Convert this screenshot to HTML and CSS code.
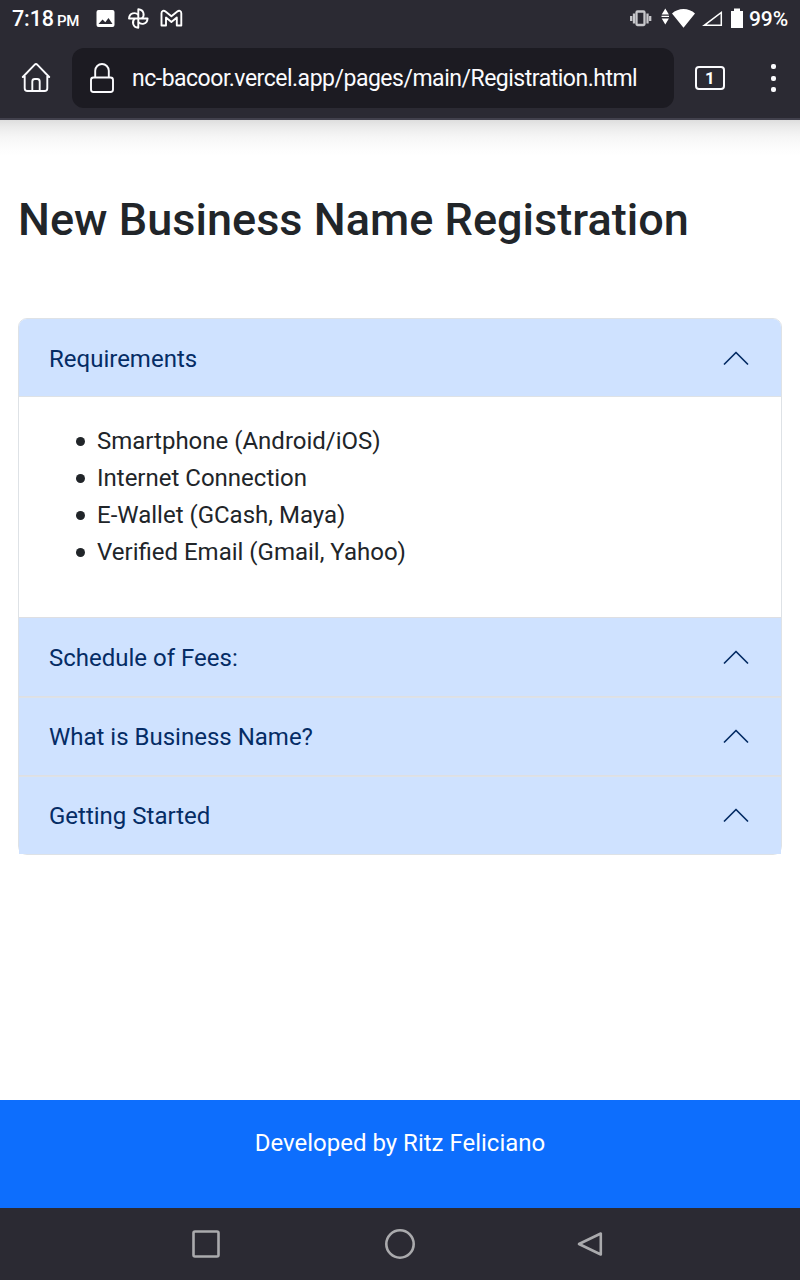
FILE: index.html
```html
<!DOCTYPE html>
<html lang="en">
<head>
<meta charset="utf-8">
<title>New Business Name Registration</title>
<link rel="stylesheet" href="styles.css">
</head>
<body>
<div class="screen">
  <header class="chrome">
    <div class="status">
      <span class="clock">7:18</span><span class="meridiem">PM</span>
      <svg class="status-left" width="90" height="24" viewBox="95 6 90 24">
        <path fill="#fff" fill-rule="evenodd" d="M98.500 10h14a2 2 0 0 1 2 2v13a2 2 0 0 1-2 2h-14a2 2 0 0 1-2-2V12a2 2 0 0 1 2-2zM98.500 24h14l-4-6-3.200 4.200-2.800-2.800z"/>
        <g fill="none" stroke="#fff" stroke-width="1.900" stroke-linejoin="round">
          <path d="M138.300 18.500V9.200c5.800.4 6.600 6.400 3.600 9.300"/>
          <path d="M138.300 18.500V9.200c5.800.4 6.600 6.400 3.600 9.300" transform="rotate(90 138.300 18.500)"/>
          <path d="M138.300 18.500V9.200c5.800.4 6.600 6.400 3.600 9.300" transform="rotate(180 138.300 18.500)"/>
          <path d="M138.300 18.500V9.200c5.800.4 6.600 6.400 3.600 9.300" transform="rotate(270 138.300 18.500)"/>
          <path d="M161.500 25.500V13.200c0-2.600 2.300-3.100 4-1.800l5.900 4.800 5.900-4.800c1.700-1.300 4-.8 4 1.800v12.300h-4.500v-8l-5.400 4.400-5.400-4.400v8z"/>
        </g>
      </svg>
      <svg class="status-right" width="120" height="24" viewBox="628 6 120 24">
        <g fill="none" stroke="#c7c7cb" stroke-width="2.300">
          <rect x="636.500" y="10.500" width="8" height="13.500" rx="1"/>
          <path d="M634 12.500v10M647.500 12.500v10M631.200 15v5M650.200 15v5"/>
        </g>
        <path fill="#fff" d="M665.300 7.500l3.600 6h-7.200zM665.300 23.500l3.600-6h-7.200zM661.500 14.800h7.500v1.200h-7.500zM672 12.500c6-6 17-6 23 0L683.500 26.800zM731 10h3V7.500h6V10h3v17h-12z"/>
        <path fill="none" stroke="#fff" stroke-width="1.500" d="M721.300 11.500v12.800h-17z"/>
      </svg>
      <span class="battery">99%</span>
    </div>
    <div class="toolbar">
      <svg class="home" width="32" height="32" viewBox="20 62 32 32" fill="none" stroke="#fbfbfe" stroke-width="1.900" stroke-linecap="round" stroke-linejoin="round">
        <path d="M22.800 77L34.500 64.800q1.500-1.500 3 0L49.200 77M24.700 76v12.200q0 2.800 2.800 2.800h17q2.800 0 2.800-2.800V76M32.300 90.500V81.500q0-2.500 2.500-2.500h2.400q2.500 0 2.500 2.500v9"/>
      </svg>
      <div class="address">
        <svg width="26" height="32" viewBox="89 62 26 32" fill="none" stroke="#fbfbfe" stroke-width="1.900">
          <rect x="91" y="77.500" width="22" height="14.500" rx="2.500"/>
          <path d="M95.200 77.500v-6.700a6.800 6.800 0 0 1 13.600 0v6.700"/>
        </svg>
        <span class="url">nc-bacoor.vercel.app/pages/main/Registration.html</span>
      </div>
      <div class="tabs">1</div>
      <div class="dots"><i></i><i></i><i></i></div>
    </div>
  </header>
  <main class="page">
    <h1>New Business Name Registration</h1>
    <div class="accordion">
      <section class="item">
        <h2><span>Requirements</span><svg class="chevron" viewBox="0 0 26 14"><path d="M1.500 13L13 1.500 24.500 13"/></svg></h2>
        <ul>
          <li>Smartphone (Android/iOS)</li>
          <li>Internet Connection</li>
          <li>E-Wallet (GCash, Maya)</li>
          <li>Verified Email (Gmail, Yahoo)</li>
        </ul>
      </section>
      <section class="item"><h2><span>Schedule of Fees:</span><svg class="chevron" viewBox="0 0 26 14"><path d="M1.500 13L13 1.500 24.500 13"/></svg></h2></section>
      <section class="item"><h2><span>What is Business Name?</span><svg class="chevron" viewBox="0 0 26 14"><path d="M1.500 13L13 1.500 24.500 13"/></svg></h2></section>
      <section class="item"><h2><span>Getting Started</span><svg class="chevron" viewBox="0 0 26 14"><path d="M1.500 13L13 1.500 24.500 13"/></svg></h2></section>
    </div>
  </main>
  <footer class="credit">Developed by Ritz Feliciano</footer>
  <nav class="system">
    <svg width="800" height="72" viewBox="0 0 800 72" fill="none" stroke="#aaaaad" stroke-width="2.600">
      <rect x="193.500" y="23.500" width="25" height="25" rx="1.500"/>
      <circle cx="400" cy="36" r="13.700"/>
      <path d="M600.800 25.500v21L579 36z" stroke-linejoin="round"/>
    </svg>
  </nav>
</div>
</body>
</html>
```
FILE: styles.css
```css
* { box-sizing: border-box; }
body { margin: 0; font-family: Roboto, "Liberation Sans", sans-serif; background: #fff; }
svg { display: block; flex: none; }
.screen { width: 800px; height: 1280px; display: flex; flex-direction: column; overflow: hidden; }
.chrome { height: 120px; background: #2b2a33; border-bottom: 2px solid #42414d; color: #fff; flex: none; }
.status { height: 36px; display: flex; align-items: center; padding: 1px 0 0 12px; font-size: 22px; white-space: nowrap; }
.clock { width: 45px; font-weight: 500; font-size: 21.5px; letter-spacing: -.1px; }
.meridiem { width: 38px; font-size: 15px; font-weight: 500; padding-top: 4px; letter-spacing: -.4px; }
.status-left { margin-top: -1px; }
.status-right { margin: 0 0 0 443px; }
.battery { margin-left: 1px; font-size: 21px; font-weight: 500; letter-spacing: -.1px; }
.toolbar { height: 82px; display: flex; align-items: center; padding: 2px 0 0 20px; }
.address { width: 602px; height: 60px; margin-left: 20px; padding-left: 17px; border-radius: 12px; background: #1c1b22; display: flex; align-items: center; }
.url { margin-left: 17px; font-size: 23px; letter-spacing: -.49px; color: #fbfbfe; white-space: nowrap; }
.tabs { width: 30px; height: 24px; margin-left: 21px; border: 2px solid #fbfbfe; border-radius: 4px; font-size: 17px; font-weight: 700; line-height: 21px; text-align: center; }
.dots { width: 5px; margin-left: 46px; display: flex; flex-direction: column; gap: 6.500px; }
.dots i { width: 5px; height: 5px; border-radius: 2px; background: #fbfbfe; }
.page { height: 980px; padding: 0 18px; color: #212529; background: linear-gradient(#dedede 0, #ebebeb 7px, #f6f6f6 17px, #fcfcfc 27px, #fff 36px) top / 100% 36px no-repeat; }
h1 { margin: 72px 0 71px; font-size: 45px; line-height: 55px; font-weight: 500; letter-spacing: .03px; white-space: nowrap; }
.accordion { border: 1px solid #dee2e6; border-radius: 9px; }
.item + .item { border-top: 1px solid #dedfe3; }
.item h2 { height: 78px; margin: 0; padding: 1px 32px 0 30px; display: flex; align-items: center; justify-content: space-between; background: #cfe2ff; color: #052c65; font-size: 24px; font-weight: 400; }
.item:first-child h2 { padding-top: 2px; border-bottom: 1px solid #dee2e6; border-radius: 8px 8px 0 0; }
.item + .item + .item h2 { border-top: 1px solid #dee2e6; padding-top: 0; }
.chevron { width: 26px; height: 14px; margin-top: -2px; fill: none; stroke: #052c65; stroke-width: 1.700; stroke-linecap: round; stroke-linejoin: round; }
ul { height: 220px; margin: 0; padding: 26px 30px 0 57px; font-size: 24px; line-height: 37px; list-style: none; }
li { display: flex; align-items: center; gap: 12px; }
li::before { content: ""; width: 9px; height: 9px; margin-top: -1px; border-radius: 50%; background: #212529; }
.credit { height: 108px; background: #0d6efd; color: #fff; font-size: 24px; line-height: 36px; padding-top: 25px; text-align: center; flex: none; }
.system { height: 72px; background: #2b2a33; flex: none; }
```
